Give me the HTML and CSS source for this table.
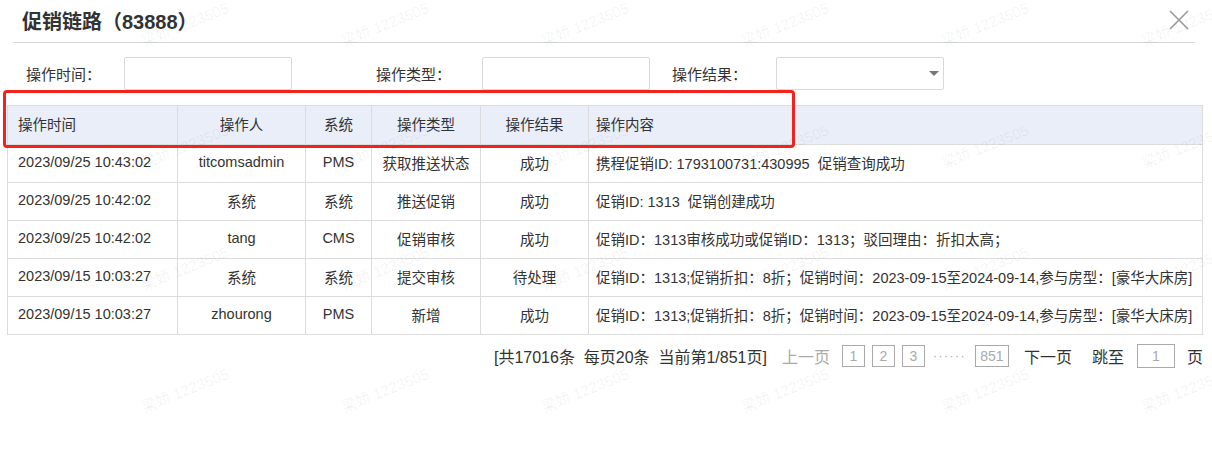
FILE: index.html
```html
<!DOCTYPE html>
<html lang="zh-CN">
<head>
    <meta charset="UTF-8">
    <meta name="viewport" content="width=device-width, initial-scale=1.0">
    <title>促销链路</title>
    <link rel="stylesheet" href="styles.css">
</head>
<body>
    <div class="dialog">
        <div class="dialog-head">
            <h3 class="dialog-title">促销链路（83888）</h3>
            <span class="dialog-close">
                <svg width="20" height="20" viewBox="0 0 20 20"><path d="M1 1L19 19M19 1L1 19" stroke="#9a9a9a" stroke-width="1.6" fill="none"/></svg>
            </span>
        </div>

        <div class="filters">
            <label class="filter-label w1">操作时间：</label>
            <input class="filter-input" type="text">
            <label class="filter-label w2">操作类型：</label>
            <input class="filter-input" type="text">
            <label class="filter-label w3">操作结果：</label>
            <div class="filter-select"><span class="caret"></span></div>
        </div>

        <table class="log-table">
            <thead>
                <tr>
                    <th class="col-time">操作时间</th>
                    <th class="col-user">操作人</th>
                    <th class="col-sys">系统</th>
                    <th class="col-type">操作类型</th>
                    <th class="col-res">操作结果</th>
                    <th class="col-text">操作内容</th>
                </tr>
            </thead>
            <tbody>
                <tr>
                    <td class="col-time">2023/09/25 10:43:02</td>
                    <td>titcomsadmin</td>
                    <td>PMS</td>
                    <td>获取推送状态</td>
                    <td>成功</td>
                    <td class="col-text">携程促销ID: 1793100731:430995&nbsp; 促销查询成功</td>
                </tr>
                <tr>
                    <td class="col-time">2023/09/25 10:42:02</td>
                    <td>系统</td>
                    <td>系统</td>
                    <td>推送促销</td>
                    <td>成功</td>
                    <td class="col-text">促销ID: 1313&nbsp; 促销创建成功</td>
                </tr>
                <tr>
                    <td class="col-time">2023/09/25 10:42:02</td>
                    <td>tang</td>
                    <td>CMS</td>
                    <td>促销审核</td>
                    <td>成功</td>
                    <td class="col-text">促销ID：1313审核成功或促销ID：1313；驳回理由：折扣太高；</td>
                </tr>
                <tr>
                    <td class="col-time">2023/09/15 10:03:27</td>
                    <td>系统</td>
                    <td>系统</td>
                    <td>提交审核</td>
                    <td>待处理</td>
                    <td class="col-text">促销ID：1313;促销折扣：8折；促销时间：2023-09-15至2024-09-14,参与房型：[豪华大床房]</td>
                </tr>
                <tr>
                    <td class="col-time">2023/09/15 10:03:27</td>
                    <td>zhourong</td>
                    <td>PMS</td>
                    <td>新增</td>
                    <td>成功</td>
                    <td class="col-text">促销ID：1313;促销折扣：8折；促销时间：2023-09-15至2024-09-14,参与房型：[豪华大床房]</td>
                </tr>
            </tbody>
        </table>

        <div class="pager">
            <span class="pager-info">[共17016条&nbsp; 每页20条&nbsp; 当前第1/851页]</span>
            <span class="pager-link disabled">上一页</span>
            <span class="pager-num">1</span>
            <span class="pager-num">2</span>
            <span class="pager-num last">3</span>
            <span class="pager-dots">······</span>
            <span class="pager-num wide">851</span>
            <span class="pager-link next">下一页</span>
            <span class="pager-link jump">跳至</span>
            <span class="pager-jump">1</span>
            <span class="pager-unit">页</span>
        </div>

        <!-- 红框标注 -->
        <div class="highlight"></div>

        <!-- 水印 -->
        <div class="watermarks">
            <span>梁娇 1223505</span><span>梁娇 1223505</span><span>梁娇 1223505</span><span>梁娇 1223505</span><span>梁娇 1223505</span><span>梁娇 1223505</span>
            <span>梁娇 1223505</span><span>梁娇 1223505</span><span>梁娇 1223505</span><span>梁娇 1223505</span><span>梁娇 1223505</span><span>梁娇 1223505</span>
            <span>梁娇 1223505</span><span>梁娇 1223505</span><span>梁娇 1223505</span><span>梁娇 1223505</span><span>梁娇 1223505</span><span>梁娇 1223505</span>
            <span>梁娇 1223505</span><span>梁娇 1223505</span><span>梁娇 1223505</span><span>梁娇 1223505</span><span>梁娇 1223505</span><span>梁娇 1223505</span>
        </div>
    </div>
</body>
</html>
```

FILE: styles.css
```css
body {
    margin: 0;
    background-color: #fff;
    font-family: "Liberation Sans", Arial, "Noto Sans CJK SC", sans-serif;
    color: #333;
}
.dialog {
    position: relative;
    width: 1212px;
    height: 459px;
    overflow: hidden;
}
.dialog-head {
    display: flex;
    align-items: center;
    justify-content: space-between;
    height: 42px;
    margin: 0 17px 0 13px;
    border-bottom: 1px solid #d6d6d6;
}
.dialog-title {
    margin: 2px 0 0 9px;
    font-size: 20px;
    font-weight: bold;
    color: #333;
    line-height: 40px;
}
.dialog-close {
    display: flex;
    margin-right: 6px;
    margin-top: -2px;
}
.filters {
    display: flex;
    align-items: center;
    margin: 14px 0 0 26px;
    height: 33px;
}
.filter-label {
    font-size: 15px;
    color: #333;
}
.filter-label.w1 { width: 98px; }
.filter-label.w2 { width: 106px; margin-left: 84px; }
.filter-label.w3 { width: 104px; margin-left: 22px; }
.filter-input, .filter-select {
    box-sizing: border-box;
    width: 168px;
    height: 33px;
    border: 1px solid #d9d9d9;
    border-radius: 2px;
    padding: 0 6px;
    margin: 0;
    font-size: 14px;
    background: #fff;
}
.filter-select {
    display: flex;
    align-items: center;
    justify-content: flex-end;
    padding-right: 4px;
}
.caret {
    width: 0;
    height: 0;
    border-left: 5px solid transparent;
    border-right: 5px solid transparent;
    border-top: 5px solid #777;
}
.log-table {
    border-collapse: collapse;
    margin: 15px 0 0 7px;
    width: 1196px;
    table-layout: fixed;
    font-size: 14.5px;
}
.log-table th, .log-table td {
    border: 1px solid #dcdcdc;
    height: 34px;
    padding: 0 0 3px 0;
    text-align: center;
    font-weight: normal;
    white-space: nowrap;
    overflow: hidden;
}
.log-table th {
    background-color: #e9eef9;
    height: 35px;
}
.log-table .col-time { width: 170px; text-align: left; padding-left: 10px; box-sizing: border-box; }
.log-table .col-user { width: 127px; }
.log-table .col-sys { width: 65px; }
.log-table .col-type { width: 108px; }
.log-table .col-res { width: 107px; }
.log-table .col-text { text-align: left; padding-left: 7px; }
.pager {
    display: flex;
    align-items: center;
    justify-content: flex-end;
    margin: 9px 9px 0 0;
    font-size: 16px;
    color: #333;
}
.pager-info { margin-right: 15px; }
.pager-link.disabled { color: #aaa; margin-right: 12px; }
.pager-link.next { margin-right: 20px; }
.pager-link.jump { margin-right: 13px; }
.pager-num {
    box-sizing: border-box;
    width: 23px;
    height: 22px;
    line-height: 20px;
    border: 1px solid #aaa;
    text-align: center;
    color: #aaa;
    font-size: 14px;
    margin-right: 7px;
}
.pager-num.last { margin-right: 8px; }
.pager-num.wide { width: 34px; margin-right: 15px; }
.pager-dots { color: #aaa; font-size: 12px; letter-spacing: 1.5px; margin-right: 9px; }
.pager-jump {
    box-sizing: border-box;
    width: 38px;
    height: 24px;
    line-height: 22px;
    border: 1px solid #aaa;
    text-align: center;
    color: #aaa;
    font-size: 14px;
    margin-right: 12px;
}
.highlight {
    position: absolute;
    left: 3px;
    top: 90px;
    width: 786px;
    height: 52px;
    border: 3px solid #f2231c;
    border-radius: 4px;
    pointer-events: none;
}
.watermarks {
    position: absolute;
    inset: 0;
    display: grid;
    grid-template-columns: repeat(6, 200px);
    grid-auto-rows: 122px;
    padding: 0 0 0 138px;
    margin-top: -8px;
    pointer-events: none;
}
.watermarks span {
    font-size: 15px;
    color: rgba(0, 0, 0, 0.06);
    transform: rotate(-22deg);
    white-space: nowrap;
    height: 40px;
}
```
